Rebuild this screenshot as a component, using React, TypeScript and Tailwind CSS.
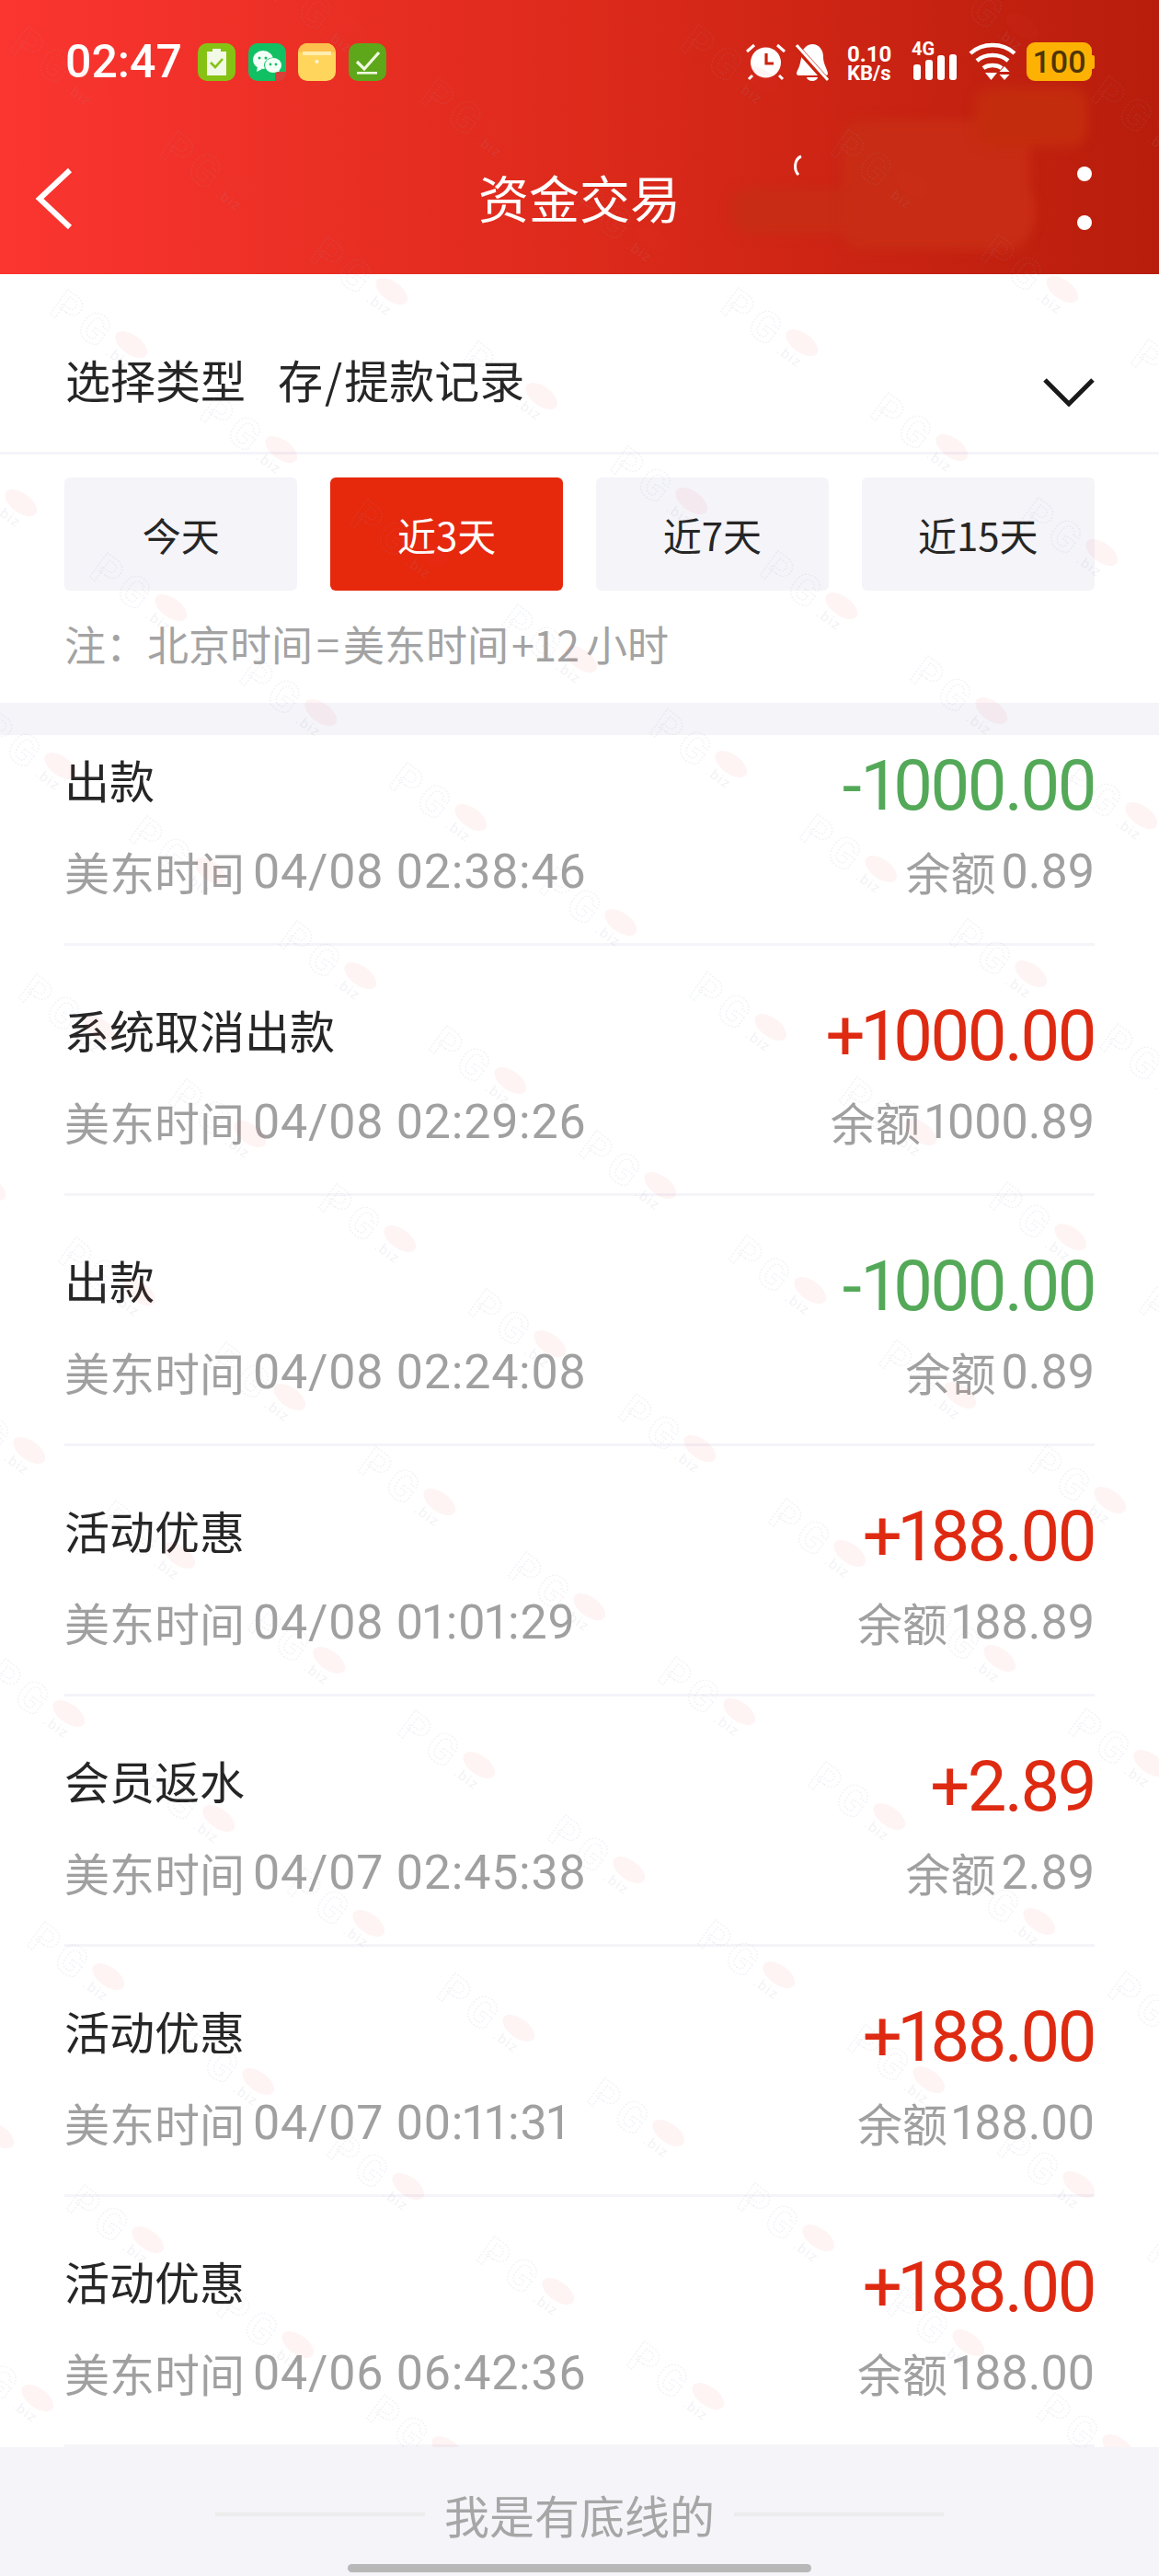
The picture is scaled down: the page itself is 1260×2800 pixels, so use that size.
const CJK = "font-['Noto_Sans_CJK_SC',sans-serif]";
const NUM = "font-['Roboto','Noto_Sans_CJK_SC',sans-serif]";

type Tx = {
  title: string;
  time: string;
  amount: string;
  balance: string;
};

const RANGES = ["今天", "近3天", "近7天", "近15天"];

const RECORDS: Tx[] = [
  { title: "出款", time: "04/08 02:38:46", amount: "-1000.00", balance: "0.89" },
  { title: "系统取消出款", time: "04/08 02:29:26", amount: "+1000.00", balance: "1000.89" },
  { title: "出款", time: "04/08 02:24:08", amount: "-1000.00", balance: "0.89" },
  { title: "活动优惠", time: "04/08 01:01:29", amount: "+188.00", balance: "188.89" },
  { title: "会员返水", time: "04/07 02:45:38", amount: "+2.89", balance: "2.89" },
  { title: "活动优惠", time: "04/07 00:11:31", amount: "+188.00", balance: "188.00" },
  { title: "活动优惠", time: "04/06 06:42:36", amount: "+188.00", balance: "188.00" },
];

// watermark repeats on a skewed lattice across the page
function watermarkPoints() {
  const pts: { x: number; y: number }[] = [];
  for (let i = -12; i < 30; i++) {
    for (let j = -10; j < 10; j++) {
      const x = 390 + i * 163 + j * 283;
      const y = 1063 + i * 114 - j * 58;
      if (x > -80 && x < 1360 && y > -60 && y < 2720) pts.push({ x, y });
    }
  }
  return pts;
}

function Watermark({ x, y }: { x: number; y: number }) {
  return (
    <svg
      className="absolute"
      width="220"
      height="180"
      viewBox="-120 -100 220 180"
      style={{ left: x - 120, top: y - 100 }}
    >
      <g transform="rotate(36)">
        <text
          x="-94"
          y="22"
          fontFamily="Roboto, sans-serif"
          fontWeight="700"
          fontSize="46"
          letterSpacing="6"
          fill="none"
          stroke="#9a9ab0"
          strokeOpacity="0.14"
          strokeWidth="1.4"
          strokeDasharray="2 1.6"
        >
          PG
        </text>
        <ellipse cx="0" cy="-3" rx="20" ry="10.5" fill="#ef4444" fillOpacity="0.06" />
        <text x="-17" y="22" fontFamily="Roboto, sans-serif" fontSize="15" letterSpacing="1.5" fill="#9a9ab0" fillOpacity="0.14">
          .biz
        </text>
      </g>
    </svg>
  );
}

// the reference font sets "1" narrower than the other figures
function Figures({ text, amount }: { text: string; amount?: boolean }) {
  return (
    <>
      {text.split("").map((ch, i) => (
        <span
          key={i}
          className={ch === "1" ? (amount ? "-ml-[3px] -mr-[4px]" : "-mx-[3px]") : ch === "-" ? "mr-[4px]" : ""}
        >
          {ch}
        </span>
      ))}
    </>
  );
}

function AppIcons() {
  return (
    <div className="flex items-center gap-[13.5px]">
      <svg width="41" height="41" viewBox="0 0 41 41">
        <rect width="41" height="41" rx="10" fill="#86c214" />
        <rect x="10" y="9" width="21" height="26" fill="#f2f9e6" />
        <rect x="16" y="6" width="9" height="4" fill="#f2f9e6" />
        <path d="M14 21l5 5 8-9" fill="none" stroke="#86c214" strokeWidth="2.6" />
      </svg>
      <svg width="41" height="41" viewBox="0 0 41 41">
        <rect width="41" height="41" rx="10" fill="#12c064" />
        <ellipse cx="16" cy="18" rx="11" ry="10" fill="#f4fff8" />
        <path d="M10 25l-1 6 6-3z" fill="#f4fff8" />
        <ellipse cx="27" cy="24" rx="10" ry="8.5" fill="#12c064" />
        <ellipse cx="27" cy="24" rx="9" ry="8" fill="#f4fff8" />
        <path d="M31 30l3 3-1-5z" fill="#f4fff8" />
        <circle cx="12" cy="16" r="1.5" fill="#12c064" />
        <circle cx="19" cy="16" r="1.5" fill="#12c064" />
        <circle cx="24" cy="23" r="1.4" fill="#12c064" />
        <circle cx="30" cy="23" r="1.4" fill="#12c064" />
        <path d="M29 41v-6a4 4 0 014-4h8v2a8 8 0 01-8 8z" fill="#d9403a" />
      </svg>
      <svg width="41" height="41" viewBox="0 0 41 41">
        <rect width="41" height="41" rx="10" fill="#ffd55c" />
        <path d="M0 10a10 10 0 0110-10h21a10 10 0 0110 10z" fill="#fdc04e" />
        <rect x="5" y="9" width="31" height="4" fill="#ffeeb0" />
        <circle cx="20.5" cy="20" r="2" fill="#fff6d8" />
      </svg>
      <svg width="41" height="41" viewBox="0 0 41 41">
        <rect width="41" height="41" rx="10" fill="#5ea71b" />
        <path d="M9 20l8 8 16-18" fill="none" stroke="#f0f8e0" strokeWidth="3.2" />
        <rect x="9" y="31" width="22" height="2.6" fill="#f0f8e0" />
      </svg>
    </div>
  );
}

function StatusIcons() {
  return (
    <div className="flex items-center">
      <svg width="43" height="41" viewBox="0 0 43 41" className="text-white">
        <circle cx="21.5" cy="21" r="16.5" fill="currentColor" />
        <path d="M22 11v11h8" fill="none" stroke="#c9240f" strokeWidth="3.2" />
        <path d="M1 9l8-7M42 9l-8-7M7 35l-4 4M36 35l4 4" stroke="currentColor" strokeWidth="3" />
      </svg>
      <svg width="36" height="41" viewBox="0 0 36 41" className="ml-[11px] text-white">
        <path
          d="M18 1c8 0 12 7 12 14 0 8 5 14 5 18 0 1-1 2-2 2H3c-1 0-2-1-2-2 0-3 3-6 4-12l3-14c3-4 6-6 10-6z"
          fill="currentColor"
        />
        <path d="M12 37a6 4 0 0012 0z" fill="currentColor" />
        <path d="M0 3l34 38" stroke="#c9240f" strokeWidth="7" />
        <path d="M1 2l34 38" stroke="currentColor" strokeWidth="3" />
      </svg>
      <div className={`ml-[20px] w-[50px] text-white font-bold ${NUM}`}>
        <div className="text-[24px] leading-[25px]">0.10</div>
        <div className="text-[22px] leading-[16px]">KB/s</div>
      </div>
      <div className={`relative ml-[20px] h-[42px] w-[50px]`}>
        <span className={`absolute left-0 top-[-3px] text-[20px] leading-[20px] font-bold text-white ${NUM}`}>4G</span>
        <svg width="50" height="42" viewBox="0 0 50 42" className="text-white">
          <rect x="2" y="24" width="8" height="17" rx="3" fill="currentColor" />
          <rect x="15" y="19" width="8" height="22" rx="3" fill="currentColor" />
          <rect x="28" y="14" width="8" height="27" rx="3" fill="currentColor" />
          <rect x="41" y="13" width="8" height="28" rx="3" fill="currentColor" />
        </svg>
      </div>
      <svg width="52" height="42" viewBox="0 0 52 42" className="ml-[12px] text-white">
        <path d="M2 12c13-12 35-12 48 0" fill="none" stroke="currentColor" strokeWidth="4.4" />
        <path d="M9 20c9-8 25-8 34 0" fill="none" stroke="currentColor" strokeWidth="4.4" />
        <path d="M16 28c5-4 15-4 20 0" fill="none" stroke="currentColor" strokeWidth="4.4" />
        <path d="M18 33h13l-6.500 8z" fill="currentColor" />
        <path d="M39 26l5.500 6h-11zM39 41l5.500-6h-11z" fill="currentColor" />
      </svg>
      <div
        className={`ml-[11px] flex h-[42px] w-[71px] items-center justify-center rounded-[9px] bg-[#fdb203] text-[34px] font-medium leading-none text-[#4e3504] ${NUM}`}
      >
        100
      </div>
      <div className="h-[15px] w-[3px] rounded-r-[2px] bg-[#fdb203]" />
    </div>
  );
}

function Header() {
  return (
    <header className="relative h-[298px] overflow-hidden bg-linear-to-r from-[#fb3530] via-[#dd2a1b] to-[#b81d0b]">
      {/* smudge where the reference was painted over */}
      <div className="absolute left-[795px] top-[205px] h-[50px] w-[330px] rounded-[20px] bg-[#c82c14] blur-[6px]" />
      <div className="absolute left-[915px] top-[130px] h-[142px] w-[205px] rounded-[24px] bg-[#c82c14] blur-[6px]" />
      <div className="absolute left-[1060px] top-[95px] h-[65px] w-[122px] rounded-[20px] bg-[#c42c0e] blur-[6px]" />

      <div className="relative flex h-[134px] items-start justify-between pl-[71px] pr-[70px] pt-[46px]">
        <div className="flex items-center gap-[19px]">
          <span className={`w-[125px] text-[50px] font-medium leading-[42px] text-white ${NUM}`}>02:47</span>
          <AppIcons />
        </div>
        <StatusIcons />
      </div>

      <div className="relative flex h-[164px] items-start pl-[38px] pt-[48px]">
        <svg width="42" height="68" viewBox="0 0 42 68">
          <path d="M38 3L5 34l33 31" fill="none" stroke="#ffffff" strokeWidth="6" />
        </svg>
        <div className={`absolute inset-x-0 top-[39px] text-center text-[55px] leading-[80px] text-white ${CJK}`}>资金交易</div>
        <svg width="18" height="24" viewBox="0 0 18 24" className="absolute left-[860px] top-[34px]">
          <path d="M11 2C3 5 3 17 8 22" fill="none" stroke="#ffffff" strokeWidth="3" />
        </svg>
        <div className="absolute left-[1171px] top-[47px] h-[16px] w-[16px] rounded-full bg-white" />
        <div className="absolute left-[1171px] top-[100px] h-[16px] w-[16px] rounded-full bg-white" />
      </div>
    </header>
  );
}

function Filters() {
  return (
    <section className={`h-[270px] px-[70px] pt-[25px] ${CJK}`}>
      <div className="grid grid-cols-4 gap-[35.5px]">
        {RANGES.map((range, index) => (
          <div
            key={range}
            className={`flex h-[123px] items-center justify-center rounded-[6px] text-[42px] leading-none ${
              index === 1 ? "bg-[#e6280d] text-white" : "bg-[#f4f4f9] text-[#262626]"
            }`}
          >
            {range}
          </div>
        ))}
      </div>
      <p className="mt-[31px] whitespace-nowrap text-[45px] leading-[54px] text-[#a3a3a3]">
        {"注\uFF1A北京时间"}
        <span className="mx-[4px]">=</span>美东时间<span className="ml-[3px]">+</span>
        <span className="-ml-[1px] mr-[7px]">12</span>小时
      </p>
    </section>
  );
}

function Row({ tx }: { tx: Tx }) {
  const up = tx.amount.startsWith("+");
  return (
    <div className="mx-[70px] h-[272px] border-b-[3px] border-[#f4f4f9] pt-[60px]">
      <div className="flex items-start justify-between">
        <span className={`-mt-[3px] text-[49px] leading-[68px] text-[#262626] ${CJK}`}>{tx.title}</span>
        <span className={`text-[76px] leading-[76px] tracking-[-2.500px] ${NUM} ${up ? "text-[#df2a12]" : "text-[#54a959]"}`}>
          <Figures text={tx.amount} amount />
        </span>
      </div>
      <div className="mt-[22px] flex items-center justify-between whitespace-nowrap text-[#a0a0a0]">
        <span className="flex items-center">
          <span className={`-mt-[2px] text-[49px] leading-[68px] ${CJK}`}>美东时间</span>
          <span className={`ml-[9px] text-[52px] leading-[68px] tracking-[0.750px] ${NUM}`}>
            <Figures text={tx.time} />
          </span>
        </span>
        <span className="flex items-center">
          <span className={`-mt-[2px] text-[49px] leading-[68px] ${CJK}`}>余额</span>
          <span className={`ml-[6px] text-[52px] leading-[68px] ${NUM}`}>
            <Figures text={tx.balance} />
          </span>
        </span>
      </div>
    </div>
  );
}

export default function App() {
  return (
    <div className="relative h-[2800px] w-[1260px] overflow-hidden bg-white">
      <Header />

      <div className={`flex h-[196px] items-center justify-between border-b-[3px] border-[#f4f4f9] pl-[71px] pr-[70px] pt-[35px] ${CJK}`}>
        <div className="text-[49px] leading-[68px] text-[#262626]">
          <span>选择类型</span>
          <span className="ml-[35px]">存</span>
          <span className="mx-[2px]">/</span>
          <span>提款记录</span>
        </div>
        <svg width="56" height="32" viewBox="0 0 56 32" className="mt-[27px]">
          <path d="M2 3l26 26L54 3" fill="none" stroke="#1a1a1a" strokeWidth="5" />
        </svg>
      </div>

      <Filters />

      <div className="h-[35px] bg-[#f4f4f9]" />

      {/* list is scrolled a little, first row slides under the band */}
      <div className="h-[1861px] overflow-hidden">
        <div className="-mt-[43px]">
          {RECORDS.map((tx, index) => (
            <Row key={index} tx={tx} />
          ))}
        </div>
      </div>

      <footer className="flex h-[140px] flex-col items-center bg-[#f4f4f9]">
        <div className="mt-[39px] flex items-center">
          <div className="h-[4px] w-[228px] bg-[#ececec]" />
          <span className={`mx-[21px] text-[49px] leading-[68px] text-[#a6a6a6] ${CJK}`}>我是有底线的</span>
          <div className="h-[4px] w-[228px] bg-[#ececec]" />
        </div>
        <div className="mt-[20px] h-[9px] w-[504px] rounded-full bg-[#b8b8b8]" />
      </footer>

      <div className="pointer-events-none absolute inset-x-0 top-0 h-[2660px] overflow-hidden">
        {watermarkPoints().map((p) => (
          <Watermark key={`${p.x}-${p.y}`} x={p.x} y={p.y} />
        ))}
      </div>
    </div>
  );
}
